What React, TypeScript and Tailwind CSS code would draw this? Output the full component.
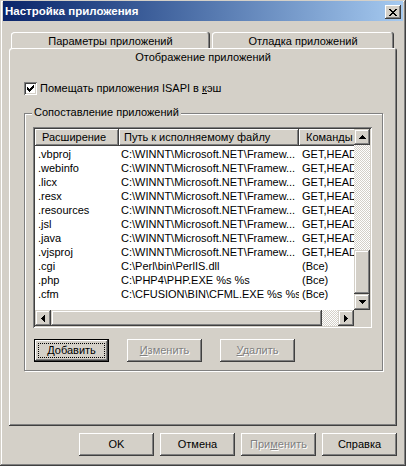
import React from "react";

const btnRaised =
  "shadow-[inset_-1px_-1px_#404040,inset_1px_1px_#ffffff,inset_-2px_-2px_#808080,inset_2px_2px_#d4d0c8]";
const sbRaised =
  "shadow-[inset_-1px_-1px_#404040,inset_1px_1px_#d4d0c8,inset_-2px_-2px_#808080,inset_2px_2px_#ffffff]";
const sunken =
  "shadow-[inset_1px_1px_#808080,inset_-1px_-1px_#ffffff,inset_2px_2px_#404040,inset_-2px_-2px_#d4d0c8]";
const dither =
  "bg-[image:repeating-conic-gradient(#d4d0c8_0_25%,#ffffff_0_50%)] bg-[length:2px_2px]";
const disabledText = "text-[#808080] [text-shadow:1px_1px_0_#ffffff]";

const arrows = {
  up: { w: 7, h: 4, d: "M3 0h1v1h-1zM2 1h3v1h-3zM1 2h5v1h-5zM0 3h7v1h-7z" },
  down: { w: 7, h: 4, d: "M0 0h7v1h-7zM1 1h5v1h-5zM2 2h3v1h-3zM3 3h1v1h-1z" },
  left: { w: 4, h: 7, d: "M0 3h1v1h-1zM1 2h1v3h-1zM2 1h1v5h-1zM3 0h1v7h-1z" },
  right: { w: 4, h: 7, d: "M0 0h1v7h-1zM1 1h1v5h-1zM2 2h1v3h-1zM3 3h1v1h-1z" },
};

const ScrollBtn = ({ dir }: { dir: keyof typeof arrows }) => {
  const a = arrows[dir];
  return (
    <div className={`w-[16px] h-[16px] shrink-0 flex items-center justify-center bg-[#d4d0c8] ${sbRaised}`}>
      <svg width={a.w} height={a.h} viewBox={`0 0 ${a.w} ${a.h}`} shapeRendering="crispEdges">
        <path d={a.d} fill="#000" />
      </svg>
    </div>
  );
};

const Button = ({
  children,
  disabled,
  isDefault,
}: {
  children: React.ReactNode;
  disabled?: boolean;
  isDefault?: boolean;
}) => (
  <div
    className={`relative w-[75px] h-[23px] flex items-center justify-center bg-[#d4d0c8] ${
      isDefault
        ? "border border-black shadow-[inset_-1px_-1px_#404040,inset_1px_1px_#ffffff,inset_-2px_-2px_#808080]"
        : btnRaised
    } ${disabled ? disabledText : "text-black"}`}
  >
    {isDefault && <div className="absolute inset-[3px] border border-dotted border-black" />}
    <span className="relative">{children}</span>
  </div>
);

const FW = "C:\\WINNT\\Microsoft.NET\\Framew...";
const GET = "GET,HEAD,POST,DEBUG";
const rows: [string, string, string][] = [
  [".vbproj", FW, GET],
  [".webinfo", FW, GET],
  [".licx", FW, GET],
  [".resx", FW, GET],
  [".resources", FW, GET],
  [".jsl", FW, GET],
  [".java", FW, GET],
  [".vjsproj", FW, GET],
  [".cgi", "C:\\Perl\\bin\\PerlIS.dll", "(Все)"],
  [".php", "C:\\PHP4\\PHP.EXE %s %s", "(Все)"],
  [".cfm", "C:\\CFUSION\\BIN\\CFML.EXE %s %s", "(Все)"],
];

const ListView = () => (
  <div className={`w-[339px] h-[201px] p-[2px] bg-white ${sunken}`}>
    <div className="grid grid-cols-[319px_16px] grid-rows-[181px_16px] w-full h-full">
      <div className="overflow-hidden bg-white">
        <div className="flex h-[17px] w-[400px]">
          <div className={`w-[84px] shrink-0 pl-[7px] leading-[17px] bg-[#d4d0c8] ${btnRaised}`}>Расширение</div>
          <div className={`w-[180px] shrink-0 pl-[5px] leading-[17px] bg-[#d4d0c8] ${btnRaised}`}>
            Путь к исполняемому файлу
          </div>
          <div className={`w-[120px] shrink-0 pl-[7px] leading-[17px] bg-[#d4d0c8] ${btnRaised}`}>Команды</div>
        </div>
        <div className="pt-[1px] w-[400px]">
          {rows.map(([ext, path, cmd]) => (
            <div key={ext} className="flex h-[14px] leading-[14px] whitespace-nowrap">
              <div className="w-[84px] shrink-0 pl-[3px] overflow-hidden">{ext}</div>
              <div className="w-[180px] shrink-0 pl-[2px] overflow-hidden">{path}</div>
              <div className="w-[120px] shrink-0 pl-[3px]">{cmd}</div>
            </div>
          ))}
        </div>
      </div>
      <div className="flex flex-col">
        <ScrollBtn dir="up" />
        <div className={`h-[105px] ${dither}`} />
        <div className={`h-[44px] bg-[#d4d0c8] ${sbRaised}`} />
        <ScrollBtn dir="down" />
      </div>
      <div className="flex">
        <ScrollBtn dir="left" />
        <div className={`w-[271px] bg-[#d4d0c8] ${sbRaised}`} />
        <div className={`w-[16px] ${dither}`} />
        <ScrollBtn dir="right" />
      </div>
      <div className="bg-[#d4d0c8]" />
    </div>
  </div>
);

const Tab = ({ w, label, className = "" }: { w: string; label: string; className?: string }) => (
  <div
    className={`${w} h-[16px] rounded-t-[3px] text-center leading-[16px] pt-[1px] shadow-[inset_-1px_0_#404040,inset_1px_1px_#ffffff,inset_-2px_0_#808080] ${className}`}
  >
    {label}
  </div>
);

export default function App() {
  return (
    <div
      className="w-[406px] h-[466px] bg-[#d4d0c8] flex flex-col text-[11px] leading-[13px] text-black font-['Liberation_Sans',Arial,sans-serif] shadow-[inset_-1px_-1px_#404040,inset_1px_1px_#d4d0c8,inset_-2px_-2px_#808080,inset_2px_2px_#ffffff]"
    >
      {/* title bar */}
      <div className="mx-[3px] mt-[1px] h-[20px] flex items-center pl-[2px] pr-[2px] bg-linear-to-r from-[#0a246a] to-[#a6caf0]">
        <span className="text-white font-bold text-[11.5px] pt-[1px]">Настройка приложения</span>
        <div className={`ml-auto self-start mt-[4px] w-[16px] h-[14px] flex items-center justify-center bg-[#d4d0c8] ${btnRaised}`}>
          <svg width="8" height="7" viewBox="0 0 8 7" shapeRendering="crispEdges">
            <path
              d="M0 0h2v1h-2zM6 0h2v1h-2zM1 1h2v1h-2zM5 1h2v1h-2zM2 2h4v1h-4zM3 3h2v1h-2zM2 4h4v1h-4zM1 5h2v1h-2zM5 5h2v1h-2zM0 6h2v1h-2zM6 6h2v1h-2z"
              fill="#000"
            />
          </svg>
        </div>
      </div>

      {/* tabs */}
      <div className="mx-[9px] mt-[11px]">
        <div className="flex pl-[2px]">
          <Tab w="w-[199px]" label="Параметры приложений" />
          <Tab w="w-[182px]" label="Отладка приложений" className="ml-[2px]" />
        </div>
        <div className="h-[378px] rounded-t-[3px] shadow-[inset_-1px_-1px_#404040,inset_1px_1px_#ffffff,inset_-2px_-2px_#808080]">
          <div className="h-[20px] pt-[3px] text-center">Отображение приложений</div>

          <div className="mt-[14px] ml-[15px] flex items-center h-[13px] gap-[3px]">
            <div className={`w-[13px] h-[13px] bg-white flex items-center justify-center ${sunken}`}>
              <svg width="7" height="7" viewBox="0 0 7 7" shapeRendering="crispEdges">
                <path
                  d="M6 0h1v1h-1zM5 1h2v1h-2zM0 2h1v1h-1zM4 2h3v1h-3zM0 3h2v1h-2zM3 3h3v1h-3zM0 4h5v1h-5zM1 5h3v1h-3zM2 6h1v1h-1z"
                  fill="#000"
                />
              </svg>
            </div>
            <span>
              Помещать приложения ISAPI в <span className="underline">к</span>эш
            </span>
          </div>

          <div className="relative mt-[18px] ml-[15px] w-[359px] h-[258px] border border-[#808080] shadow-[inset_1px_1px_#ffffff,1px_1px_#ffffff] pt-[13px] pl-[8px]">
            <span className="absolute left-[7px] top-[-8px] px-[2px] bg-[#d4d0c8]">Сопоставление приложений</span>
            <ListView />
            <div className="mt-[11px] ml-[1px] flex gap-[18px]">
              <Button isDefault>
                <span className="underline">Д</span>обавить
              </Button>
              <Button disabled>
                <span className="underline">И</span>зменить
              </Button>
              <Button disabled>
                <span className="underline">У</span>далить
              </Button>
            </div>
          </div>
        </div>
      </div>

      {/* dialog buttons */}
      <div className="mt-[7px] mr-[9px] flex justify-end gap-[6px]">
        <Button>OK</Button>
        <Button>Отмена</Button>
        <Button disabled>
          При<span className="underline">м</span>енить
        </Button>
        <Button>Справка</Button>
      </div>
    </div>
  );
}
